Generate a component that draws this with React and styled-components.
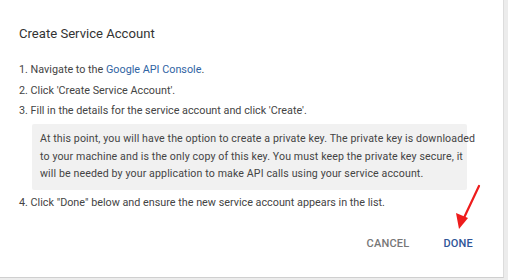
import React from 'react'
import styled, { createGlobalStyle } from 'styled-components'

const GlobalStyle = createGlobalStyle`
  html, body {
    margin: 0;
    padding: 0;
    background: #ececec;
  }
  body {
    font-family: Roboto, "Liberation Sans", Arial, sans-serif;
  }
`

const Dialog = styled.div`
  position: relative;
  box-sizing: border-box;
  width: 504px;
  height: 278px;
  background: #fff;
  border-right: 1px solid #dcdcdc;
  border-bottom: 1px solid #cfcfcf;
  padding: 24px 19px 0 19px;
  display: flex;
  flex-direction: column;
`

const Title = styled.h2`
  margin: 0;
  font-size: 13.1px;
  font-weight: 400;
  color: #333;
  line-height: 20px;
`

const Steps = styled.ol`
  margin: 16px 0 0 0;
  padding: 0;
  list-style: none;
  font-size: 10.8px;
  color: #444;
`

const Step = styled.li`
  line-height: 20.5px;
`

const Link = styled.a`
  color: #2f64a3;
  text-decoration: none;
`

const Note = styled.div`
  margin: 2.5px 17px 3px 13px;
  padding: 6px 6px 7.5px 8px;
  background: #f1f1f1;
  border-radius: 2px;
  font-size: 10.6px;
  letter-spacing: 0.12px;
  line-height: 17.5px;
  color: #444;
  white-space: nowrap;
`

const Actions = styled.div`
  display: flex;
  justify-content: flex-end;
  gap: 34px;
  margin-top: 22px;
  padding-right: 11px;
`

const Button = styled.button`
  border: none;
  background: none;
  padding: 0;
  font-family: inherit;
  font-size: 11px;
  line-height: 16px;
  font-weight: 500;
  letter-spacing: 0.2px;
  text-transform: uppercase;
  color: ${p => (p.$primary ? '#2f5597' : '#777')};
  cursor: pointer;
`

const Arrow = styled.svg`
  position: absolute;
  left: 452px;
  top: 182px;
`

export default function App() {
  return (
    <>
      <GlobalStyle />
      <Dialog>
        <Title>Create Service Account</Title>
        <Steps>
          <Step>1. Navigate to the <Link href="#">Google API Console</Link>.</Step>
          <Step>2. Click 'Create Service Account'.</Step>
          <Step>
            3. Fill in the details for the service account and click 'Create'.
            <Note>
              At this point, you will have the option to create a private key. The private key is downloaded<br />
              to your machine and is the only copy of this key. You must keep the private key secure, it<br />
              will be needed by your application to make API calls using your service account.
            </Note>
          </Step>
          <Step>4. Click "Done" below and ensure the new service account appears in the list.</Step>
        </Steps>
        <Actions>
          <Button>Cancel</Button>
          <Button $primary>Done</Button>
        </Actions>
        <Arrow width="34" height="52" viewBox="0 0 34 52">
          <line x1="27" y1="4" x2="10" y2="40" stroke="#ee1c1c" strokeWidth="2.2" strokeLinecap="round" />
          <polygon points="7,47 4,31 16,36" fill="#ee1c1c" />
        </Arrow>
      </Dialog>
    </>
  )
}
